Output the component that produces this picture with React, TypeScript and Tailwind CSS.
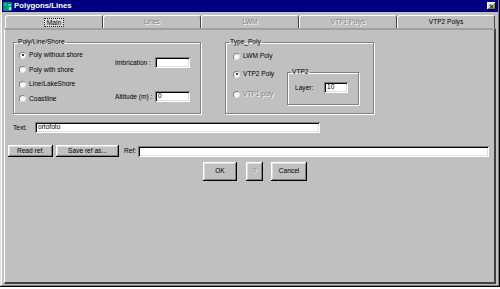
import React from "react";

const raised =
  "shadow-[inset_-1px_-1px_#000,inset_1px_1px_#fff,inset_-2px_-2px_#808080,inset_2px_2px_#dfdfdf]";
const sunken =
  "shadow-[inset_1px_1px_#808080,inset_-1px_-1px_#fff,inset_2px_2px_#000,inset_-2px_-2px_#dfdfdf]";

const Radio = ({ label, checked = false, disabled = false }: { label: string; checked?: boolean; disabled?: boolean }) => (
  <div className="flex items-center h-[8px] gap-[3px]">
    <span className="relative w-[7px] h-[7px] rounded-full bg-white border border-t-[#808080] border-l-[#808080] border-b-[#dfdfdf] border-r-[#dfdfdf] flex items-center justify-center">
      {checked && <span className="w-[2px] h-[2px] rounded-full bg-black" />}
    </span>
    <span className={disabled ? "text-[#808080] [text-shadow:1px_1px_0_#fff]" : ""}>{label}</span>
  </div>
);

const Input = ({ value = "", className = "" }: { value?: string; className?: string }) => (
  <div className={`h-[11px] bg-white ${sunken} pl-[3px] flex items-center leading-none ${className}`}>{value}</div>
);

const Button = ({ label, className = "", dim = false }: { label: string; className?: string; dim?: boolean }) => (
  <div className={`bg-[#c0c0c0] ${raised} flex items-center justify-center leading-none ${className}`}>
    <span className={dim ? "text-[#808080] [text-shadow:1px_1px_0_#fff]" : ""}>{label}</span>
  </div>
);

const Tab = ({ label, active = false, disabled = false }: { label: string; active?: boolean; disabled?: boolean }) => (
  <div className="w-[98px] h-[13px] rounded-t-[3px] border-t border-l border-white border-r border-r-[#404040] flex items-center justify-center bg-[#c0c0c0]">
    <span
      className={
        active
          ? "border border-dotted border-[#202020] bg-[#d8d8d8] px-[2px] h-[9px] leading-[7px]"
          : disabled
          ? "text-[#808080] [text-shadow:1px_1px_0_#fff]"
          : ""
      }
    >
      {label}
    </span>
  </div>
);

const Group = ({ title, className = "", children }: { title: string; className?: string; children: React.ReactNode }) => (
  <fieldset className={`border border-[#808080] shadow-[1px_1px_0_#fff,inset_1px_1px_0_#fff] ${className}`}>
    <legend className="ml-[3px] px-[1px] h-[8px] leading-[8px]">{title}</legend>
    {children}
  </fieldset>
);

const AppIcon = () => (
  <svg width="9" height="9" viewBox="0 0 9 9">
    <rect x="0" y="0" width="9" height="9" fill="#008080" />
    <rect x="1" y="1" width="3" height="3" fill="#00c0a0" />
    <rect x="5" y="2" width="3" height="2" fill="#40e0c0" />
    <rect x="2" y="5" width="4" height="3" fill="#00a080" />
    <rect x="6" y="5" width="2" height="3" fill="#80ffe0" />
  </svg>
);

export default function App() {
  return (
    <div className="w-[500px] h-[289px] bg-white font-['Liberation_Sans',Arial,sans-serif] text-[6.6px] text-black">
      <div className="h-[287px] bg-[#c0c0c0] flex flex-col px-[2px] pb-[2px] shadow-[inset_-1px_-1px_#000,inset_1px_0_#dfdfdf,inset_-2px_-2px_#808080,inset_2px_0_#fff]">
        {/* Title bar */}
        <div className="h-[12px] bg-[#000080] flex items-center pl-[1px] pr-[2px] gap-[2px] shrink-0">
          <AppIcon />
          <span className="text-white font-bold text-[7.8px] leading-none">Polygons/Lines</span>
          <div className={`ml-auto w-[9px] h-[8px] bg-[#c0c0c0] ${raised} flex items-center justify-center text-[7px] font-bold leading-none`}>
            ×
          </div>
        </div>

        {/* Tabs */}
        <div className="flex pl-[3px] mt-[3px] shrink-0">
          <Tab label="Main" active />
          <Tab label="Lines" disabled />
          <Tab label="LWM" disabled />
          <Tab label="VTP1 Polys" disabled />
          <Tab label="VTP2 Polys" />
        </div>

        {/* Panel */}
        <div className="flex-1 mx-[2px] mb-[1px] border-t-2 border-t-[#a0a0a0] border-l border-l-white border-r-2 border-r-[#404040] border-b-2 border-b-[#404040] px-[2px] pt-[8px]">
          <div className="flex ml-[6px]">
            <Group title="Poly/Line/Shore" className="w-[188px] h-[76px]">
              <div className="flex">
                <div className="flex flex-col gap-[6.5px] pl-[5px] pt-[5px] w-[99px]">
                  <Radio label="Poly without shore" checked />
                  <Radio label="Poly with shore" />
                  <Radio label="Line/LakeShore" />
                  <Radio label="Coastline" />
                </div>
                <div className="flex flex-col">
                  <div className="flex items-center mt-[11px]">
                    <span className="w-[42px] pl-[2px]">Imbrication :</span>
                    <Input className="w-[35px] h-[10px]" />
                  </div>
                  <div className="flex items-center mt-[23px]">
                    <span className="w-[42px] pl-[2px]">Altitude (m) :</span>
                    <Input value="0" className="w-[35px]" />
                  </div>
                </div>
              </div>
            </Group>

            <Group title="Type_Poly" className="w-[149px] h-[76px] ml-[24px]">
              <div className="flex pl-[7px]">
                <div className="flex flex-col w-[54px]">
                  <div className="mt-[6px]"><Radio label="LWM Poly" /></div>
                  <div className="mt-[10px]"><Radio label="VTP2 Poly" checked /></div>
                  <div className="mt-[12px]"><Radio label="VTP1 poly" disabled /></div>
                </div>
                <Group title="VTP2" className="w-[72px] h-[37px] mt-[22px]">
                  <div className="flex items-center pl-[7px] mt-[6px]">
                    <span className="w-[29px]">Layer:</span>
                    <Input value="10" className="w-[24px] h-[10px]" />
                  </div>
                </Group>
              </div>
            </Group>
          </div>

          <div className="flex items-center ml-[6px] mt-[8px]">
            <span className="w-[22px]">Text:</span>
            <Input value="ortofoto" className="w-[285px]" />
          </div>

          <div className="flex items-center mt-[12px] ml-[1px]">
            <Button label="Read ref." className="w-[45px] h-[12px]" />
            <Button label="Save ref as..." className="w-[63px] h-[12px] ml-[3px]" />
            <span className="ml-[5px] w-[14px]">Ref:</span>
            <Input className="w-[351px]" />
          </div>

          <div className="flex justify-center mt-[5px]">
            <div className="flex ml-[11px]">
              <Button label="OK" className="w-[34px] h-[19px]" />
              <Button label="?" dim className="w-[17px] h-[19px] ml-[9px]" />
              <Button label="Cancel" className="w-[36px] h-[19px] ml-[8px]" />
            </div>
          </div>
        </div>
      </div>
    </div>
  );
}
